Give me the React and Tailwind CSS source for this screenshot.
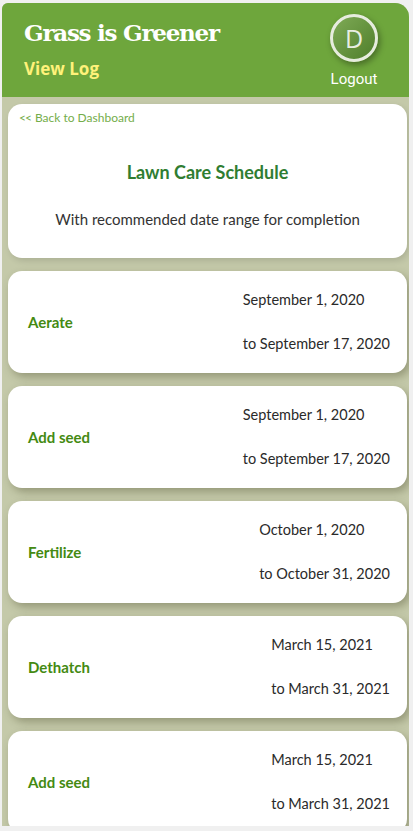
import React from "react";

const tasks = [
  { name: "Aerate", from: "September 1, 2020", to: "to September 17, 2020" },
  { name: "Add seed", from: "September 1, 2020", to: "to September 17, 2020" },
  { name: "Fertilize", from: "October 1, 2020", to: "to October 31, 2020" },
  { name: "Dethatch", from: "March 15, 2021", to: "to March 31, 2021" },
  { name: "Add seed", from: "March 15, 2021", to: "to March 31, 2021" },
];

export default function App() {
  return (
    <div className="w-[413px] h-[831px] bg-[#f0f0f0] pt-[3px] pl-[2px] overflow-hidden">
      <div className="w-[407px] h-[823px] bg-[#c4c9a9] rounded-tl-[6px] rounded-tr-[14px] overflow-hidden flex flex-col">
        <header className="h-[94px] shrink-0 bg-[#6ea63c] flex justify-between pl-[21px] pr-[31px]">
          <div className="flex flex-col">
            <h1
              className="text-white font-bold text-[23px] leading-none mt-[18px] ml-[1px] tracking-[-1.25px]"
              style={{ fontFamily: '"DejaVu Serif", "Liberation Serif", serif' }}
            >
              Grass is Greener
            </h1>
            <a
              className="text-[#fff27a] font-bold text-[17px] leading-none mt-[16px] ml-[1px]"
              style={{ fontFamily: '"Open Sans", "Liberation Sans", sans-serif' }}
            >
              View Log
            </a>
          </div>
          <div className="flex flex-col items-center pt-[11px]">
            <div className="w-[48px] h-[48px] rounded-full border-[3px] border-[#e6ecde] bg-gradient-to-br from-[#7fab56] to-[#4f7e2a] shadow-[2px_3px_6px_rgba(0,0,0,0.35)] flex items-center justify-center">
              <span
                className="text-[#e8eee2] text-[25px] leading-none"
                style={{ fontFamily: '"Open Sans", "Liberation Sans", sans-serif' }}
              >
                D
              </span>
            </div>
            <span
              className="text-white text-[15px] leading-none mt-[10px]"
              style={{ fontFamily: 'Roboto, "Liberation Sans", sans-serif' }}
            >
              Logout
            </span>
          </div>
        </header>

        <main
          className="flex flex-col gap-[13px] pt-[7px] pl-[6px] pr-[2px]"
          style={{ fontFamily: 'Lato, "Open Sans", sans-serif' }}
        >
          <section className="bg-white rounded-[14px] h-[154px] flex flex-col relative shadow-[2px_3px_6px_rgba(0,0,0,0.12)]">
            <a className="text-[#74ad4a] text-[12px] leading-none mt-[8px] ml-[11px] flex items-center gap-[4px]">
              <span className="tracking-[-1px]">&lt;&lt;</span>
              <span>Back to Dashboard</span>
            </a>
            <h2 className="text-[#2f7d32] font-bold text-[18px] leading-none text-center mt-[39px]">
              Lawn Care Schedule
            </h2>
            <p className="text-[#333] text-[15px] leading-none text-center mt-[31px]">
              With recommended date range for completion
            </p>
          </section>

          {tasks.map((t, i) => (
            <section
              key={i}
              className="bg-white rounded-[14px] h-[102px] shrink-0 flex items-center justify-between pl-[20px] pr-[17px] shadow-[3px_4px_8px_rgba(60,60,30,0.35)]"
            >
              <span className="text-[#448a12] font-bold text-[15px] leading-none">{t.name}</span>
              <div className="flex flex-col gap-[29px] text-[#2a2a2a] text-[14.5px] leading-none">
                <span>{t.from}</span>
                <span>{t.to}</span>
              </div>
            </section>
          ))}
        </main>
      </div>
    </div>
  );
}
